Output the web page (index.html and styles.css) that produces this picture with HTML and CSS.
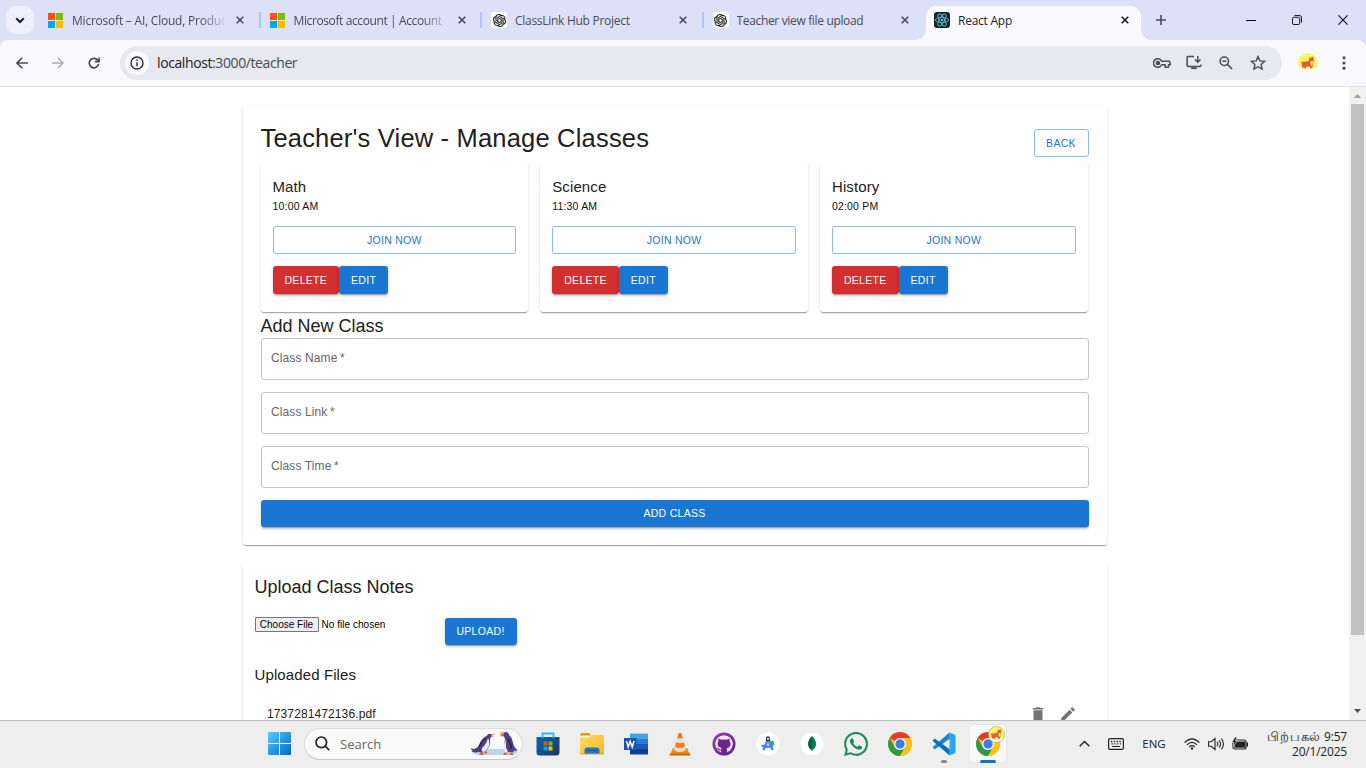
FILE: index.html
```html
<!DOCTYPE html>
<html lang="en">
<head>
<meta charset="utf-8">
<title>React App</title>
<link rel="stylesheet" href="styles.css">
</head>
<body>
<svg class="defs" width="0" height="0">
  <defs>
    <linearGradient id="winG" x1="0" y1="0" x2="1" y2="1"><stop offset="0" stop-color="#4fd0ff"/><stop offset="1" stop-color="#0067c8"/></linearGradient>
    <linearGradient id="storeG" x1="0" y1="0" x2="1" y2="1"><stop offset="0" stop-color="#0669b4"/><stop offset="1" stop-color="#22345f"/></linearGradient>
    <linearGradient id="folderG" x1="0" y1="0" x2="1" y2="1"><stop offset="0" stop-color="#ffd965"/><stop offset="1" stop-color="#fbb91c"/></linearGradient>
    <linearGradient id="ghG" x1="0" y1="0" x2="1" y2="1"><stop offset="0" stop-color="#9a37b8"/><stop offset="1" stop-color="#5b2284"/></linearGradient>
  </defs>
  <symbol id="ms" viewBox="0 0 15 15"><path fill="#f8511d" d="M0 0h7v7H0z"/><path fill="#80bb03" d="M8 0h7v7H8z"/><path fill="#02a6f2" d="M0 8h7v7H0z"/><path fill="#ffba02" d="M8 8h7v7H8z"/></symbol>
  <symbol id="x" viewBox="0 0 8 8"><path d="M.7.7l6.6 6.6M7.3.7L.7 7.3" stroke="currentColor" stroke-width="1.6" fill="none"/></symbol>
  <symbol id="knot" viewBox="0 0 24 24"><path d="M22.2819 9.8211a5.9847 5.9847 0 0 0-.5157-4.9108 6.0462 6.0462 0 0 0-6.5098-2.9A6.0651 6.0651 0 0 0 4.9807 4.1818a5.9847 5.9847 0 0 0-3.9977 2.9 6.0462 6.0462 0 0 0 .7427 7.0966 5.98 5.98 0 0 0 .511 4.9107 6.051 6.051 0 0 0 6.5146 2.9001A5.9847 5.9847 0 0 0 13.2599 24a6.0557 6.0557 0 0 0 5.7718-4.2058 5.9894 5.9894 0 0 0 3.9977-2.9001 6.0557 6.0557 0 0 0-.7475-7.0729zm-9.022 12.6081a4.4755 4.4755 0 0 1-2.8764-1.0408l.1419-.0804 4.7783-2.7582a.7948.7948 0 0 0 .3927-.6813v-6.7369l2.02 1.1686a.071.071 0 0 1 .038.052v5.5826a4.504 4.504 0 0 1-4.4945 4.4944zm-9.6607-4.1254a4.4708 4.4708 0 0 1-.5346-3.0137l.142.0852 4.783 2.7582a.7712.7712 0 0 0 .7806 0l5.8428-3.3685v2.3324a.0804.0804 0 0 1-.0332.0615L9.74 19.9502a4.4992 4.4992 0 0 1-6.1408-1.6464zM2.3408 7.8956a4.485 4.485 0 0 1 2.3655-1.9728V11.6a.7664.7664 0 0 0 .3879.6765l5.8144 3.3543-2.0201 1.1685a.0757.0757 0 0 1-.071 0l-4.8303-2.7865A4.504 4.504 0 0 1 2.3408 7.872zm16.5963 3.8558L13.1038 8.364 15.1192 7.2a.0757.0757 0 0 1 .071 0l4.8303 2.7913a4.4944 4.4944 0 0 1-.6765 8.1042v-5.6772a.79.79 0 0 0-.407-.667zm2.0107-3.0231l-.142-.0852-4.7735-2.7818a.7759.7759 0 0 0-.7854 0L9.409 9.2297V6.8974a.0662.0662 0 0 1 .0284-.0615l4.8303-2.7866a4.4992 4.4992 0 0 1 6.6802 4.66zM8.3065 12.863l-2.02-1.1638a.0804.0804 0 0 1-.038-.0567V6.0742a4.4992 4.4992 0 0 1 7.3757-3.4537l-.142.0805L8.704 5.459a.7948.7948 0 0 0-.3927.6813zm1.0976-2.3654l2.602-1.4998 2.6069 1.4998v2.9994l-2.5974 1.4997-2.6067-1.4997Z" fill="#1d1d1d" stroke="#1d1d1d" stroke-width=".5"/></symbol>
  <symbol id="corgi" viewBox="0 0 20 20"><circle cx="10" cy="10" r="10" fill="#fffbe0"/><path fill="#fff463" d="M1.5 15A10 10 0 1 1 18.5 15L15 14.500H4z"/><path fill="#e0622a" d="M3.200 8.500q4 .5 7-.3l1-1.200.2-3.500 1.700 1.500 2.200-1.700.4 3.400.3 2.300-1.200 1v3.500l-1 2.500h-1.600l-.3-2.300-3.500-.2-.7 2H4.500z"/><path fill="#f6e4d2" d="M12.500 8.500l2-.6 1 .7-1 1-.2 2.600-1.500.7zM4.700 14.500h1.600v1.200H4.700zM12 14.900h1.800v1H12z"/></symbol>
  <symbol id="chrome" viewBox="0 0 24 24"><circle cx="12" cy="12" r="12" fill="#fbc116"/><path fill="#e33b2e" d="M12 12L1.608 6A12 12 0 0 1 22.392 6H12z"/><path fill="#2a9a48" d="M12 24A12 12 0 0 1 1.608 6L6.800 15l5.200 3 5.200-3z"/><path fill="#fbc116" d="M12 6h10.392A12 12 0 0 1 12 24l5.200-9z"/><circle cx="12" cy="12" r="6" fill="#fff"/><circle cx="12" cy="12" r="4.700" fill="#3b7ded"/></symbol>
</svg>

<header class="tabstrip">
  <button class="tab-search"><svg width="10" height="7" viewBox="0 0 10 7"><path d="M1.200 1.200L5 5l3.800-3.800" fill="none" stroke="#1f1f1f" stroke-width="2"/></svg></button>
  <div class="tabs">
    <div class="tab sep"><svg class="fav" width="15" height="15"><use href="#ms"/></svg><span class="tab-title fade t1">Microsoft – AI, Cloud, Produc</span><svg class="close" width="8" height="8"><use href="#x"/></svg></div>
    <div class="tab sep"><svg class="fav" width="15" height="15"><use href="#ms"/></svg><span class="tab-title fade t2">Microsoft account | Account</span><svg class="close" width="8" height="8"><use href="#x"/></svg></div>
    <div class="tab sep"><span class="fav gpt"><svg width="13" height="13"><use href="#knot"/></svg></span><span class="tab-title t3">ClassLink Hub Project</span><svg class="close" width="8" height="8"><use href="#x"/></svg></div>
    <div class="tab"><span class="fav gpt"><svg width="13" height="13"><use href="#knot"/></svg></span><span class="tab-title t4">Teacher view file upload</span><svg class="close" width="8" height="8"><use href="#x"/></svg></div>
    <div class="tab active"><span class="fav react"><svg width="16" height="16" viewBox="0 0 16 16" fill="none" stroke="#4fb9d3" stroke-width=".9"><ellipse cx="8" cy="8" rx="6.700" ry="2.600"/><ellipse cx="8" cy="8" rx="6.700" ry="2.600" transform="rotate(60 8 8)"/><ellipse cx="8" cy="8" rx="6.700" ry="2.600" transform="rotate(120 8 8)"/><circle cx="8" cy="8" r="1.200" fill="#61dafb" stroke="none"/></svg></span><span class="tab-title t5">React App</span><svg class="close" width="8" height="8"><use href="#x"/></svg></div>
  </div>
  <button class="new-tab"><svg width="10" height="10" viewBox="0 0 10 10"><path d="M5 0v10M0 5h10" stroke="#474a59" stroke-width="1.600"/></svg></button>
  <div class="win-controls">
    <span><svg width="10" height="10" viewBox="0 0 10 10"><path d="M0 5.500h10" stroke="#111"/></svg></span>
    <span><svg width="10" height="10" viewBox="0 0 11 11" fill="none" stroke="#111" stroke-width="1.100"><rect x=".5" y="2.500" width="8" height="8" rx="1.500"/><path d="M2.700.5h5.300a2.500 2.500 0 0 1 2.500 2.500v5.300"/></svg></span>
    <span><svg width="10" height="10" viewBox="0 0 11 11"><path d="M.5.5l10 10M10.500.5l-10 10" stroke="#111" stroke-width="1.200"/></svg></span>
  </div>
</header>

<nav class="toolbar">
  <div class="nav-buttons">
    <span><svg width="12" height="12" viewBox="0 0 12 12" fill="none" stroke="#474a59" stroke-width="1.600"><path d="M12 6H1.200M6.200.8L1 6l5.200 5.200"/></svg></span>
    <span><svg width="12" height="12" viewBox="0 0 12 12" fill="none" stroke="#a9aab3" stroke-width="1.500"><path d="M0 6h10.800M5.800.8L11 6l-5.200 5.200"/></svg></span>
    <span><svg width="12" height="12" viewBox="0 0 13 13" fill="none" stroke="#474a59" stroke-width="1.800"><path d="M11.500 7.500A5.100 5.100 0 1 1 10.600 3.600L11.800 5M12 .5V5H7.600"/></svg></span>
  </div>
  <div class="omnibox">
    <span class="info"><svg width="14" height="14" viewBox="0 0 14 14"><circle cx="7" cy="7" r="6" fill="none" stroke="#2b2c33" stroke-width="1.400"/><path d="M6.300 6.200h1.500v4H6.300zM6.300 3.600h1.500v1.500H6.300z" fill="#2b2c33"/></svg></span>
    <span class="url"><b>localhost</b>:3000/teacher</span>
    <div class="omni-icons">
      <span><svg width="18" height="12" viewBox="0 0 18 12" fill="none" stroke="#474a59" stroke-width="1.500"><path d="M8.700 4.200H16.500l.8 2.200v1.400h-1.800v2.500h-3.300V7.800H8.700A4.300 4.300 0 1 1 8.700 4.200z" stroke-linejoin="round"/><circle cx="4.900" cy="6" r="1.500" fill="#474a59"/></svg></span>
      <span><svg width="16" height="15" viewBox="0 0 17 16" fill="none" stroke="#474a59" stroke-width="1.600"><path d="M8.500 1.700H2.200a1 1 0 0 0-1 1v8.500a1 1 0 0 0 1 1h12.600a1 1 0 0 0 1-1V10M12.500 1v6.500M9.500 4.800l3 3 3-3"/><path d="M5.500 13h6v2h-6z" fill="#474a59" stroke="none"/></svg></span>
      <span><svg width="14" height="14" viewBox="0 0 15 15" fill="none" stroke="#474a59" stroke-width="1.600"><circle cx="5.700" cy="5.700" r="4.500"/><path d="M3.600 5.700h4.200M9 9l5 5"/></svg></span>
      <span><svg width="16" height="16" viewBox="0 0 16 16" fill="none" stroke="#474a59" stroke-width="1.400"><path d="M8 1.600l1.900 4.300 4.700.5-3.500 3.100 1 4.600L8 11.700l-4.100 2.400 1-4.600L1.400 6.400l4.700-.5z"/></svg></span>
    </div>
  </div>
  <svg class="avatar" width="20" height="20"><use href="#corgi"/></svg>
  <svg class="dots" width="4" height="14" viewBox="0 0 4 14" fill="#474a59"><circle cx="2" cy="1.800" r="1.600"/><circle cx="2" cy="7" r="1.600"/><circle cx="2" cy="12.200" r="1.600"/></svg>
</nav>

<div class="viewport">
  <main class="page">
    <section class="paper manage">
      <div class="head"><h1>Teacher's View - Manage Classes</h1><button class="btn outlined back">BACK</button></div>
      <div class="grid">
        <article class="paper class-card"><h3>Math</h3><p>10:00 AM</p><button class="btn outlined join">JOIN NOW</button><div class="actions"><button class="btn red">DELETE</button><button class="btn blue">EDIT</button></div></article>
        <article class="paper class-card"><h3>Science</h3><p>11:30 AM</p><button class="btn outlined join">JOIN NOW</button><div class="actions"><button class="btn red">DELETE</button><button class="btn blue">EDIT</button></div></article>
        <article class="paper class-card"><h3>History</h3><p>02:00 PM</p><button class="btn outlined join">JOIN NOW</button><div class="actions"><button class="btn red">DELETE</button><button class="btn blue">EDIT</button></div></article>
      </div>
      <h2>Add New Class</h2>
      <form class="form">
        <div class="field">Class Name<i>*</i></div>
        <div class="field">Class Link<i>*</i></div>
        <div class="field">Class Time<i>*</i></div>
        <button type="button" class="btn blue add">ADD CLASS</button>
      </form>
    </section>
    <section class="paper upload">
      <h2>Upload Class Notes</h2>
      <div class="upload-row">
        <div class="file"><button type="button" class="choose">Choose File</button><span>No file chosen</span></div>
        <button class="btn blue up">UPLOAD!</button>
      </div>
      <h3>Uploaded Files</h3>
      <div class="file-row"><span>1737281472136.pdf</span>
        <div class="row-icons">
          <svg width="18" height="18" viewBox="0 0 24 24" fill="#757575"><path d="M6 19c0 1.100.9 2 2 2h8c1.100 0 2-.9 2-2V7H6zM19 4h-3.500l-1-1h-5l-1 1H5v2h14z"/></svg>
          <svg width="18" height="18" viewBox="0 0 24 24" fill="#757575"><path d="M3 17.250V21h3.750L17.810 9.940l-3.750-3.750zM20.710 7.040c.39-.39.39-1.020 0-1.410l-2.340-2.340a.9959.9959 0 0 0-1.410 0l-1.830 1.830 3.750 3.750z"/></svg>
        </div>
      </div>
    </section>
  </main>
  <div class="scrollbar">
    <svg width="7" height="4" viewBox="0 0 7 4"><path d="M0 4L3.500 0 7 4z" fill="#a3a3a3"/></svg>
    <div class="thumb"></div>
    <svg width="7" height="4" viewBox="0 0 7 4"><path d="M0 0l3.500 4L7 0z" fill="#505050"/></svg>
  </div>
</div>

<footer class="taskbar">
  <span class="app start"><svg width="23" height="23" viewBox="0 0 23 23"><path fill="url(#winG)" d="M0 1a1 1 0 0 1 1-1h10v11H0zM12 0h10a1 1 0 0 1 1 1v10H12zM0 12h11v11H1a1 1 0 0 1-1-1zM12 12h11v10a1 1 0 0 1-1 1H12z"/></svg></span>
  <div class="search">
    <svg width="15" height="15" viewBox="0 0 15 15" fill="none" stroke="#222" stroke-width="1.700"><circle cx="6.300" cy="6.300" r="5.300"/><path d="M10.200 10.200l4 4"/></svg>
    <span>Search</span>
    <svg class="penguins" width="50" height="25" viewBox="0 0 50 25">
      <path d="M3 21q3-3 11-3h26q8 0 9 3-2 3-9 3H12q-8 0-9-3z" fill="#b9d6ee"/>
      <path d="M22 3q-3-1-4 1.500-4 2-6.500 7.500-2 4-6 6l-4.500-.5 3 2.500-2 .5q5 1.500 8 .5l3 1 5-3q4-5 3-11l1.500-3z" fill="#4a4080"/>
      <path d="M19 7q2.500 4 .5 9-2 4-5.500 5-2-1-1-4 4.500-4 6-10z" fill="#f0eaf2"/><path d="M16 7q-5 4-5.500 9" stroke="#272147" stroke-width="1.500" fill="none"/>
      <path d="M22 3.500l4-1-3 2.200 2 1.500-3.500-.8zM12 21l3 3h-5zM17 20l2 2.500h-5z" fill="#e8612c"/>
      <path d="M34 4q0-3 3-3 3 .5 3 3 3 2 4 8 1 5 5 7.500l-4 .3-1 1.700-3-.5-5 .5.500-5q-1.500-5-.5-8-.5-3-2-4.500z" fill="#4c4285"/>
      <path d="M36 7.500q1.500 5 1 9l2 4.500-3 1q-1-3-.5-6.500z" fill="#f0eaf2"/><path d="M39 8q3 4 3.500 10" stroke="#272147" stroke-width="1.500" fill="none"/>
      <path d="M35 3.500L30.500 1l2 3L30.500 5l4.500.5zM33 0l2 2-1 1zM36 21l-2 3h5zM42 21l-2 3h5z" fill="#e8612c"/>
    </svg>
  </div>
  <div class="apps">
    <span class="app"><svg width="24" height="24" viewBox="0 0 24 24"><path d="M.5 5h23v15a3.500 3.500 0 0 1-3.500 3.500H4A3.500 3.500 0 0 1 .5 20z" fill="url(#storeG)"/><path d="M6.500 6V1.500h11V6" fill="none" stroke="#24b9ee" stroke-width="1.800"/><path fill="#f05023" d="M7.500 9.500h4v4h-4z"/><path fill="#7eb900" d="M12.500 9.500h4v4h-4z"/><path fill="#00a3ee" d="M7.500 14.500h4v4h-4z"/><path fill="#ffb800" d="M12.500 14.500h4v4h-4z"/></svg></span>
    <span class="app"><svg width="24" height="24" viewBox="0 0 24 24"><path d="M0 3a2 2 0 0 1 2-2h7l2 2.500H0z" fill="#d89b08"/><path d="M0 5.500h9L11 3h11a2 2 0 0 1 2 2v17H0z" fill="url(#folderG)"/><path d="M4.500 22v-4a2.500 2.500 0 0 1 2.500-2.500h10a2.500 2.500 0 0 1 2.500 2.500v4z" fill="#127bcb"/><path d="M7 18.500h10" stroke="#0b5799"/><path d="M0 22h24" stroke="#e7a91b"/></svg></span>
    <span class="app"><svg width="24" height="24" viewBox="0 0 24 24"><path fill="#41a5ee" d="M6 1.500h18v5.500H6z"/><path fill="#2b7cd3" d="M6 7h18v5H6z"/><path fill="#185abd" d="M6 12h18v5H6z"/><path fill="#103f91" d="M6 17h18v5.500H6z"/><path fill="#1951b2" d="M0 6h12.500v12H0z"/><path d="M2.500 9l1.700 6L6.200 9.300 8.200 15l1.800-6" fill="none" stroke="#fff" stroke-width="1.500"/></svg></span>
    <span class="app"><svg width="24" height="24" viewBox="0 0 24 24"><path d="M5 16h14l3 7H2z" fill="#f48b0b"/><path d="M2 21.500h20l.5 2h-21z" fill="#cf6206"/><path d="M10.500 1.500q1.500-1.500 3 0L18 18q-6 4-12 0z" fill="#dededb"/><path d="M10.500 1.500q1.500-1.500 3 0l1.200 4.300q-2.700 1.500-5.400 0zM8.200 10.200q3.800 2 7.600 0l1.200 4.300q-5 3-10 0z" fill="#ee7e17"/></svg></span>
    <span class="app"><svg width="24" height="24" viewBox="0 0 24 24"><circle cx="12" cy="12" r="11.500" fill="url(#ghG)"/><circle cx="12" cy="12" r="8.800" fill="#f1e8f7"/><path fill="#68278d" d="M6.500 6.500l3 1.300q2.500-.6 5 0l3-1.300.2 3q1.300 2 .6 4.300-.9 2.200-3.800 2.600.8 1 .7 4-3.200 1.300-6 0V18.500q-2.600.5-3.500-1.500l-1-1.200q1.700-.2 2.300 1 .8 1 2.200.5.1-.8.500-1.200-3-.4-3.900-2.600-.7-2.300.5-4.300z"/></svg></span>
    <span class="app"><svg width="24" height="24" viewBox="0 0 24 24"><circle cx="12" cy="12" r="11.500" fill="#fff"/><path d="M14 9h3.500l1 4-3 1z" fill="#34a665"/><path d="M12 7.500L7.300 18M12 7.500l4.700 10.500M5.500 13.500q6.500 2.500 11.500 0" stroke="#4087f5" stroke-width="2.400" fill="none"/><path d="M10.500 4.500h3l.8 4.500h-4.600z" fill="#23334a"/><circle cx="12" cy="7" r="1" fill="#fff"/></svg></span>
    <span class="app"><svg width="24" height="24" viewBox="0 0 24 24"><circle cx="12" cy="12" r="11.300" fill="#fff"/><path d="M12 4q-4 3.500-4 8 0 4 3.500 6l.5 2z" fill="#116149"/><path d="M12 4q4 3.500 4 8 0 4-3.500 6l-.5 2z" fill="#00804f"/></svg></span>
    <span class="app"><svg width="24" height="24" viewBox="0 0 24 24"><path fill="#16885a" d="M17.472 14.382c-.297-.149-1.758-.867-2.030-.967-.273-.099-.471-.148-.67.150-.197.297-.767.966-.94 1.164-.173.199-.347.223-.644.075-.297-.150-1.255-.463-2.390-1.475-.883-.788-1.480-1.761-1.653-2.059-.173-.297-.018-.458.130-.606.134-.133.298-.347.446-.52.149-.174.198-.298.298-.497.099-.198.050-.371-.025-.52-.075-.149-.669-1.612-.916-2.207-.242-.579-.487-.5-.669-.51-.173-.008-.371-.01-.57-.01-.198 0-.52.074-.792.372-.272.297-1.040 1.016-1.040 2.479 0 1.462 1.065 2.875 1.213 3.074.149.198 2.096 3.200 5.077 4.487.709.306 1.262.489 1.694.625.712.227 1.360.195 1.871.118.571-.085 1.758-.719 2.006-1.413.248-.694.248-1.289.173-1.413-.074-.124-.272-.198-.57-.347m-5.421 7.403h-.004a9.870 9.870 0 0 1-5.031-1.378l-.361-.214-3.741.982.998-3.648-.235-.374a9.860 9.860 0 0 1-1.510-5.260c.001-5.450 4.436-9.884 9.888-9.884 2.640 0 5.122 1.030 6.988 2.898a9.825 9.825 0 0 1 2.893 6.994c-.003 5.450-4.437 9.884-9.885 9.884m8.413-18.297A11.815 11.815 0 0 0 12.050 0C5.495 0 .16 5.335.157 11.892c0 2.096.547 4.142 1.588 5.945L.057 24l6.305-1.654a11.882 11.882 0 0 0 5.683 1.448h.005c6.554 0 11.890-5.335 11.893-11.893a11.821 11.821 0 0 0-3.480-8.413Z"/></svg></span>
    <span class="app"><svg width="24" height="24"><use href="#chrome"/></svg></span>
    <span class="app running"><svg width="24" height="24" viewBox="0 0 24 24"><path d="M17.500.5L.5 15.200l2.200 2.300L18 6.500z" fill="#1a86cf"/><path d="M2.700 6.500L.5 8.800l17 14.700.5-6z" fill="#0a70bb"/><path d="M17.500.5L23.500 3v18l-6 2.500z" fill="#2ba5ef"/></svg></span>
    <span class="app current"><svg width="24" height="24"><use href="#chrome"/></svg><svg class="badge" width="17" height="17" viewBox="-.5 -.5 21 21"><use href="#corgi" width="20" height="20"/><circle cx="10" cy="10" r="9.900" fill="none" stroke="#a9a36d" stroke-width=".8"/></svg></span>
  </div>
  <div class="tray">
    <span class="c1"><svg width="11" height="7" viewBox="0 0 11 7"><path d="M.7 6.200l4.800-4.700 4.800 4.700" fill="none" stroke="#222" stroke-width="1.500"/></svg></span>
    <span class="c2"><svg width="16" height="12" viewBox="0 0 16 12"><rect x=".6" y=".6" width="14.800" height="10.800" rx="1.500" fill="none" stroke="#222" stroke-width="1.200"/><path d="M3 3.500h10M3.500 5.800h9.500" stroke="#222" stroke-width="1.300" stroke-dasharray="1.300 1.500"/><path d="M4 8.500h8" stroke="#222"/></svg></span>
    <span class="lang">ENG</span>
    <span class="c3"><svg width="16" height="12" viewBox="0 0 16 12" fill="none" stroke="#222" stroke-width="1.100"><path d="M.6 4.600q7.400-7.400 14.800 0M2.900 6.800q5.100-4.900 10.200 0M5.200 9q2.800-2.600 5.600 0"/><circle cx="8" cy="10.500" r="1.200" fill="#222" stroke="none"/></svg></span>
    <span class="c3"><svg width="17" height="14" viewBox="0 0 17 14" fill="none" stroke="#222" stroke-width="1.100"><path d="M.6 4.700h2.600L7 1.500v11L3.200 9.300H.6zM9 4.800q1.500 2.200 0 4.400M11.200 3.200q2.600 3.800 0 7.600M13.400 1.500q4 5.500 0 11"/></svg></span>
    <span class="c3"><svg width="16" height="13" viewBox="0 0 16 13"><rect x="1" y="3" width="13" height="9" rx="2" fill="none" stroke="#222" stroke-width="1.200"/><path d="M2.500 4.500h10.500v6.200H2.500zM14.500 5.500H16v4h-1.500z" fill="#222"/><path d="M3 0L0 5.500h2L1.200 9.500 5.500 4H3.500L5 0z" fill="#222" stroke="#eee" stroke-width=".6"/></svg></span>
    <div class="clock"><span class="time"><span class="ta">பிற்பகல்</span> 9:57</span><span>20/1/2025</span></div>
  </div>
</footer>
</body>
</html>
```

FILE: styles.css
```css
* { box-sizing: border-box; }
body { margin: 0; width: 1366px; height: 768px; overflow: hidden; display: flex; flex-direction: column; background: #fff; font-family: "Liberation Sans", Arial, sans-serif; color: #212121; }
button { font: inherit; border: 0; padding: 0; background: none; color: inherit; }
h1, h2, h3, p { margin: 0; font-weight: 400; }
svg { display: block; flex: none; }
.defs { position: absolute; }

.tabstrip { height: 40px; flex: none; display: flex; align-items: flex-start; background: #dde1f7; font-family: "Open Sans", "Noto Sans", sans-serif; font-size: 12px; color: #474a59; }
.tab-search { width: 28px; height: 28px; margin: 6px 5px 0 6px; border-radius: 10px; background: #eff0fd; display: grid; place-items: center; }
.tabs { display: flex; }
.tab { position: relative; width: 221.5px; height: 34px; margin-top: 6px; padding: 0 16.500px 6px 9px; display: flex; align-items: center; }
.sep::after { content: ""; position: absolute; right: 0; top: 6px; width: 2px; height: 16px; background: #b0c6fb; }
.fav { width: 16px; height: 16px; margin-right: 8px; flex: none; }
svg.fav { width: 15px; height: 15px; margin-right: 9px; }
.gpt, .react { display: grid; place-items: center; border-radius: 3px; background: #fff; }
.react { background: #212125; }
.tab-title { flex: 1; white-space: nowrap; overflow: hidden; margin-right: 13px; line-height: 18px; padding-top: 1px; }
.t1, .t2 { flex: none; width: 152px; margin-right: 12px; }
.t1 { letter-spacing: -.22px; }
.t2 { letter-spacing: -.39px; }
.t3 { letter-spacing: -.28px; }
.t4 { letter-spacing: -.34px; }
.t5 { letter-spacing: -.25px; }
.fade { -webkit-mask-image: linear-gradient(90deg, #000 128px, transparent 156px); mask-image: linear-gradient(90deg, #000 128px, transparent 156px); }
.close { margin-left: auto; }
.active { width: 215px; margin-left: 1px; padding: 0 12px 6px 8px; background: #faf9ff; border-radius: 10px 10px 0 0; color: #1f1f1f; }
.active::before, .active::after { content: ""; position: absolute; bottom: 0; width: 10px; height: 10px; }
.active::before { left: -10px; background: radial-gradient(circle at 0 0, transparent 9.500px, #faf9ff 10px); }
.active::after { right: -10px; background: radial-gradient(circle at 100% 0, transparent 9.500px, #faf9ff 10px); }
.new-tab { width: 40px; height: 40px; display: grid; place-items: center; }
.win-controls { margin-left: auto; display: flex; }
.win-controls span { width: 46px; height: 40px; display: grid; place-items: center; }

.toolbar { height: 47px; flex: none; display: flex; align-items: center; padding: 0 20px 1px 4px; background: #faf9ff; border-bottom: 1px solid #e1e1ea; border-radius: 8px 8px 0 0; box-shadow: 0 -8px 0 0 #dde1f7; clip-path: inset(0); }
.nav-buttons { display: flex; }
.nav-buttons span { width: 36px; display: grid; place-items: center; }
.omnibox { margin-left: 8px; width: 1162px; height: 34px; border-radius: 17px; background: #e8e8f1; display: flex; align-items: center; padding: 0 8px 0 5px; }
.info { width: 24px; height: 24px; border-radius: 12px; background: #faf9ff; display: grid; place-items: center; margin-right: 8px; }
.url { font: 14px/20px "Open Sans", "Noto Sans", sans-serif; letter-spacing: -.4px; color: #474a52; padding-top: 1px; }
.url b { font-weight: 400; color: #1c1c22; }
.omni-icons { margin-left: auto; display: flex; }
.omni-icons span { width: 32px; display: grid; place-items: center; }
.avatar { margin-left: 16px; border-radius: 50%; }
.dots { margin-left: auto; }

.viewport { flex: none; height: 633px; display: flex; overflow: hidden; background: #fff; }
.page { width: 1349px; height: 633px; overflow: hidden; padding: 18px 242.500px 0; }
.paper { background: #fff; border-radius: 3px; box-shadow: 0 2px 1px -1px rgba(0,0,0,.2), 0 1px 1px rgba(0,0,0,.14), 0 1px 3px rgba(0,0,0,.12); }
.manage { height: 440px; padding: 18px; }
.head { display: flex; justify-content: space-between; height: 40px; }
h1 { font-size: 25.500px; line-height: 31.500px; letter-spacing: .187px; }
.btn { display: inline-flex; align-items: center; justify-content: center; height: 28px; padding: 0 12px; border-radius: 3px; font-size: 10.500px; letter-spacing: .3px; white-space: nowrap; }
.outlined { border: 1px solid #8cbaea; color: #1976d2; }
.back { width: 55px; margin-top: 6px; }
.red, .blue { color: #fff; box-shadow: 0 2px 1px -1px rgba(0,0,0,.2), 0 1.500px 2px rgba(0,0,0,.14), 0 1px 4px rgba(0,0,0,.12); }
.red { background: #d32f2f; width: 66.600px; }
.blue { background: #1976d2; }
.grid { display: grid; grid-template-columns: repeat(3, 1fr); gap: 12px; margin-right: .8px; }
.class-card { height: 149px; padding: 12px; }
h3 { font-size: 15px; line-height: 24px; letter-spacing: .11px; }
.class-card p { font-size: 10.500px; line-height: 15px; letter-spacing: .18px; color: #111; }
.join { width: 100%; margin-top: 12px; }
.actions { display: flex; margin-top: 12px; }
.actions .blue { width: 49px; }
h2 { font-size: 18px; line-height: 24px; }
.manage h2 { margin-top: 2px; height: 24px; }
.form { display: flex; flex-direction: column; gap: 12px; }
.field { height: 42px; border: 1px solid #c4c4c4; border-radius: 3px; padding: 11px 9.500px; font-size: 12px; line-height: 17px; letter-spacing: .11px; color: #666; }
.field i { font-style: normal; margin-left: 2.500px; }
.add { height: 27px; padding-bottom: 2px; }
.upload { margin-top: 18px; height: 260px; padding: 12px; }
.upload-row { display: flex; justify-content: flex-start; margin-top: 18px; height: 46px; padding-top: 1px; }
.file { width: 190px; display: flex; align-items: flex-start; font-size: 10px; line-height: 14px; }
.file span { letter-spacing: .04px; color: #000; }
.choose { width: 64px; height: 15px; margin: -1px 3px 0 0; border: 1px solid #767676; border-radius: 1px; background: #efefef; color: #000; line-height: 13px; }
.up { width: 72px; height: 27px; padding-bottom: 2px; }
.file-row { display: flex; justify-content: space-between; align-items: center; margin-top: 18px; height: 18px; padding: 0 18px 0 12.500px; font-size: 12px; letter-spacing: .11px; }
.row-icons { display: flex; gap: 12px; }
.scrollbar { width: 17px; background: #f1f1f1; display: flex; flex-direction: column; align-items: center; padding: 7px 0; }
.thumb { width: 13px; height: 531px; margin: 6px 0 auto; background: #c1c1c1; }

.taskbar { height: 48px; flex: none; display: flex; align-items: center; padding-bottom: 2px; background: #eee; border-top: 1px solid #bdbdbd; font-family: "Open Sans", "Noto Sans", sans-serif; }
.app { position: relative; width: 44px; height: 47px; display: grid; place-items: center; }
.start { margin-left: 257.500px; }
.search { width: 219px; height: 32px; margin: 0 3px 0 2.500px; padding: 0 3px 0 10px; border: 1px solid #dcdcdc; border-bottom-color: #c6c6c6; border-radius: 16px; background: #fafafa; display: flex; align-items: center; font-size: 13px; color: #666; }
.search span { margin-left: 10px; }
.penguins { margin-left: auto; }
.apps { display: flex; }
.running::after, .current::after { content: ""; position: absolute; bottom: 4px; left: 19px; width: 6px; height: 3px; border-radius: 2px; background: #8a8a8a; }
.current::before { content: ""; position: absolute; inset: 4px 3px; border: 1px solid #e4e4e4; border-radius: 4px; background: #f9f9f9; }
.current svg { position: relative; }
.current::after { left: 14px; width: 16px; background: #0a74cf; }
.current .badge { position: absolute; left: 22px; top: 6px; }
.tray { margin-left: auto; display: flex; align-items: center; font-size: 12px; color: #222; padding-right: 19px; }
.tray > span { display: grid; place-items: center; }
.c1 { width: 32px; }
.c2 { width: 32px; }
.tray > .lang { width: 48px; padding-right: 4px; font-size: 11.500px; }
.c3 { width: 24px; }
.clock { width: 95px; display: flex; flex-direction: column; align-items: flex-end; line-height: 16px; font-size: 12px; letter-spacing: -.2px; white-space: nowrap; }
.time { height: 16px; }
.ta { font-size: 13px; letter-spacing: .8px; line-height: 16px; }
```
